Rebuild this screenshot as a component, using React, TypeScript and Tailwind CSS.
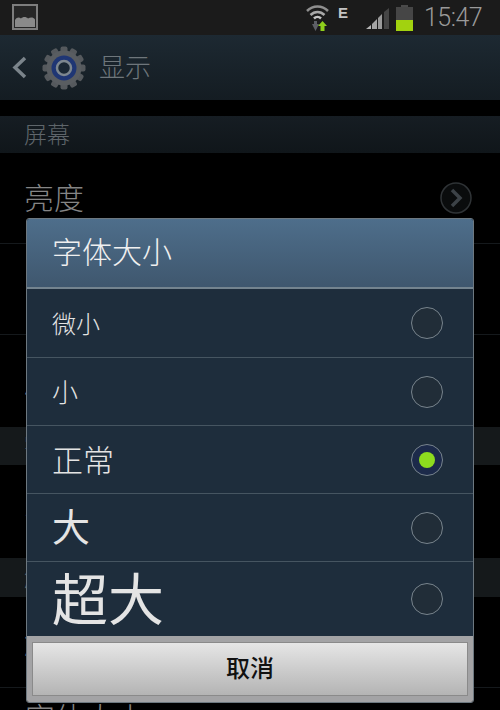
const cjk = { fontFamily: '"Noto Sans CJK SC", "Liberation Sans", sans-serif' };

const sizes = [
  { label: '微小', h: 'h-[69px]', text: 'text-[24px] font-light', checked: false },
  { label: '小', h: 'h-[68px]', text: 'text-[26px] font-light pb-[2px]', checked: false },
  { label: '正常', h: 'h-[68px]', text: 'text-[31px] font-light pb-[3px]', checked: true },
  { label: '大', h: 'h-[68px]', text: 'text-[38px] font-normal pb-[6px]', checked: false },
  { label: '超大', h: 'h-[74px]', text: 'text-[56px] font-normal pb-[6px]', checked: false },
];

function StatusBar() {
  return (
    <div className="flex h-[35px] items-center bg-[#1b1b1b] pl-3 pr-[16px]">
      <svg width="26" height="26" viewBox="0 0 26 26" className="mb-[1px]">
        <rect x="1" y="1" width="24" height="24" fill="#262626" stroke="#7d7d7d" strokeWidth="2" />
        <path d="M3 23V16c2-3 4-3 6-1.500 2-2 5-2 7 0 2-1 5-2 7 1v7.500z" fill="#8a8a8a" />
      </svg>
      <svg width="24" height="27" viewBox="0 0 24 27" className="ml-auto mt-[2px]">
        <path d="M1 6C7 0 16 0 22 6" fill="none" stroke="#8f8f8f" strokeWidth="2.500" />
        <path d="M4.500 10c4-4 10-4 14 0" fill="none" stroke="#a8a8a8" strokeWidth="2.500" />
        <path d="M8 13.500c2-2 5-2 7 0" fill="none" stroke="#c4c4c4" strokeWidth="2.500" />
        <path d="M6 19h2v-3h3v3h2l-3.500 7z" fill="#5d5f66" />
        <path d="M12 21l4.500-5 4.500 5h-2.500v5h-4v-5z" fill="#8fcf1c" />
      </svg>
      <span className="ml-[8px] mb-[10px] w-[20px] text-[15px] font-bold leading-none text-[#c4c4c4]" style={{ fontFamily: '"Liberation Sans", sans-serif' }}>
        E
      </span>
      <svg width="24" height="24" viewBox="0 0 24 24" className="ml-[8px] mt-[3px]">
        <path d="M0 22l5-4v4z" fill="#b5b5b5" />
        <path d="M6 17l5-5v10H6z" fill="#a5a5a5" />
        <path d="M12 11l4-4v15h-4z" fill="#9a9a9a" />
        <path d="M18 5l5-4v21h-5z" fill="#454545" />
      </svg>
      <svg width="17" height="26" viewBox="0 0 17 26" className="ml-[6px] mt-[1px]">
        <rect x="5" y="0" width="7" height="3" fill="#4a4a4a" />
        <rect x="0" y="2" width="17" height="24" fill="#464646" />
        <rect x="0" y="15" width="17" height="11" fill="#a2d20f" />
      </svg>
      <span className="ml-[11px] w-[60px] text-[25px] font-light leading-none tracking-[-0.5px] text-[#9a9a9a]" style={{ fontFamily: 'Roboto, sans-serif' }}>
        15:47
      </span>
    </div>
  );
}

function GearIcon() {
  const teeth = [0, 30, 60, 90, 120, 150, 180, 210, 240, 270, 300, 330];
  return (
    <svg width="44" height="44" viewBox="0 0 44 44">
      {teeth.map((deg) => (
        <rect key={deg} x="18.500" y="0.500" width="7" height="8" rx="2" fill="#55595d" transform={`rotate(${deg} 22 22)`} />
      ))}
      <circle cx="22" cy="22" r="17.500" fill="#595d61" />
      <circle cx="22" cy="22" r="12.500" fill="#1f3674" />
      <circle cx="22" cy="22" r="7" fill="#1b2835" stroke="#7d8790" strokeWidth="2.500" />
    </svg>
  );
}

function ActionBar() {
  return (
    <div className="flex h-[65px] items-center bg-gradient-to-b from-[#1d2932] to-[#141c22] pl-[12px]">
      <svg width="15" height="23" viewBox="0 0 15 23">
        <path d="M13 2L3 11.500 13 21" fill="none" stroke="#7b848b" strokeWidth="3.500" />
      </svg>
      <div className="ml-[15px]">
        <GearIcon />
      </div>
      <span className="ml-[13px] pb-[3px] text-[26px] font-light leading-none text-[#6e767b]" style={cjk}>
        显示
      </span>
    </div>
  );
}

function SectionHeader({ label, className }: { label: string; className: string }) {
  return (
    <div className={`flex items-center pl-[24px] pb-[3px] ${className}`}>
      <span className="text-[23px] font-light leading-none text-[#5f666b]" style={cjk}>
        {label}
      </span>
    </div>
  );
}

function Row({ label, className, arrow }: { label: string; className: string; arrow?: boolean }) {
  return (
    <div className={`flex items-center border-b border-[#15191c] pl-[24px] pr-[28px] ${className}`}>
      <span className="pb-[4px] text-[30px] font-light leading-none text-[#858585]" style={cjk}>
        {label}
      </span>
      {arrow && (
        <svg width="32" height="32" viewBox="0 0 32 32" className="ml-auto">
          <circle cx="16" cy="16" r="15" fill="#0a0c0d" stroke="#2f3336" strokeWidth="1.500" />
          <path d="M12 8l8 8-8 8" fill="none" stroke="#3c4247" strokeWidth="3.500" />
        </svg>
      )}
    </div>
  );
}

function Radio({ checked }: { checked: boolean }) {
  return (
    <div className={`flex h-[32px] w-[32px] items-center justify-center rounded-full border-[1.5px] border-[#78848d] ${checked ? 'bg-[#1c2a4a]' : 'bg-[#212d38]'}`}>
      {checked && <div className="h-[16px] w-[16px] rounded-full bg-[#8ddb1e]" />}
    </div>
  );
}

function FontSizeDialog() {
  return (
    <div className="absolute left-[26px] top-[218px] w-[448px] overflow-hidden rounded-[3px] border border-[#6d7880]">
      <div className="flex h-[70px] items-center border-b-2 border-[#74848f] bg-gradient-to-b from-[#4e6e8b] to-[#3f576e] pl-[25px] pb-[6px]">
        <span className="text-[30px] font-light leading-none text-[#f0f0f0]" style={cjk}>
          字体大小
        </span>
      </div>
      {sizes.map((size, i) => (
        <div key={size.label} className={`flex items-center bg-[#1e2d3c] pl-[25px] pr-[30px] ${size.h} ${i < sizes.length - 1 ? 'border-b border-[#465561]' : ''}`}>
          <span className={`leading-none text-[#e4e4e4] ${size.text}`} style={cjk}>
            {size.label}
          </span>
          <div className="ml-auto">
            <Radio checked={size.checked} />
          </div>
        </div>
      ))}
      <div className="h-[66px] bg-[#a3a3a5] px-[5px] pt-[6px]">
        <button className="h-[54px] w-full border border-[#8a8a8a] bg-gradient-to-b from-[#e6e6e6] to-[#b4b4b4] pb-[4px] text-[24px] font-medium leading-none text-[#111]" style={cjk}>
          取消
        </button>
      </div>
    </div>
  );
}

export default function App() {
  return (
    <div className="relative h-[710px] w-[500px] overflow-hidden bg-black">
      <StatusBar />
      <ActionBar />
      <div className="h-[16px] bg-black" />
      <SectionHeader label="屏幕" className="h-[37px] bg-gradient-to-b from-[#161d23] to-[#10161a]" />
      <Row label="亮度" className="h-[91px]" arrow />
      <Row label="自动旋转屏幕" className="h-[91px]" />
      <Row label="屏幕超时" className="h-[92px] border-b-0" />
      <SectionHeader label="字体" className="h-[38px] bg-[#15191b]" />
      <Row label="字体样式" className="h-[93px] border-b-0" />
      <SectionHeader label="触控键" className="h-[39px] bg-[#15191b]" />
      <Row label="触控键灯" className="h-[91px]" />
      <div className="pl-[25px] pt-[13px]">
        <span className="text-[30px] font-light leading-none text-[#858585]" style={cjk}>
          字体大小
        </span>
      </div>
      <FontSizeDialog />
    </div>
  );
}
